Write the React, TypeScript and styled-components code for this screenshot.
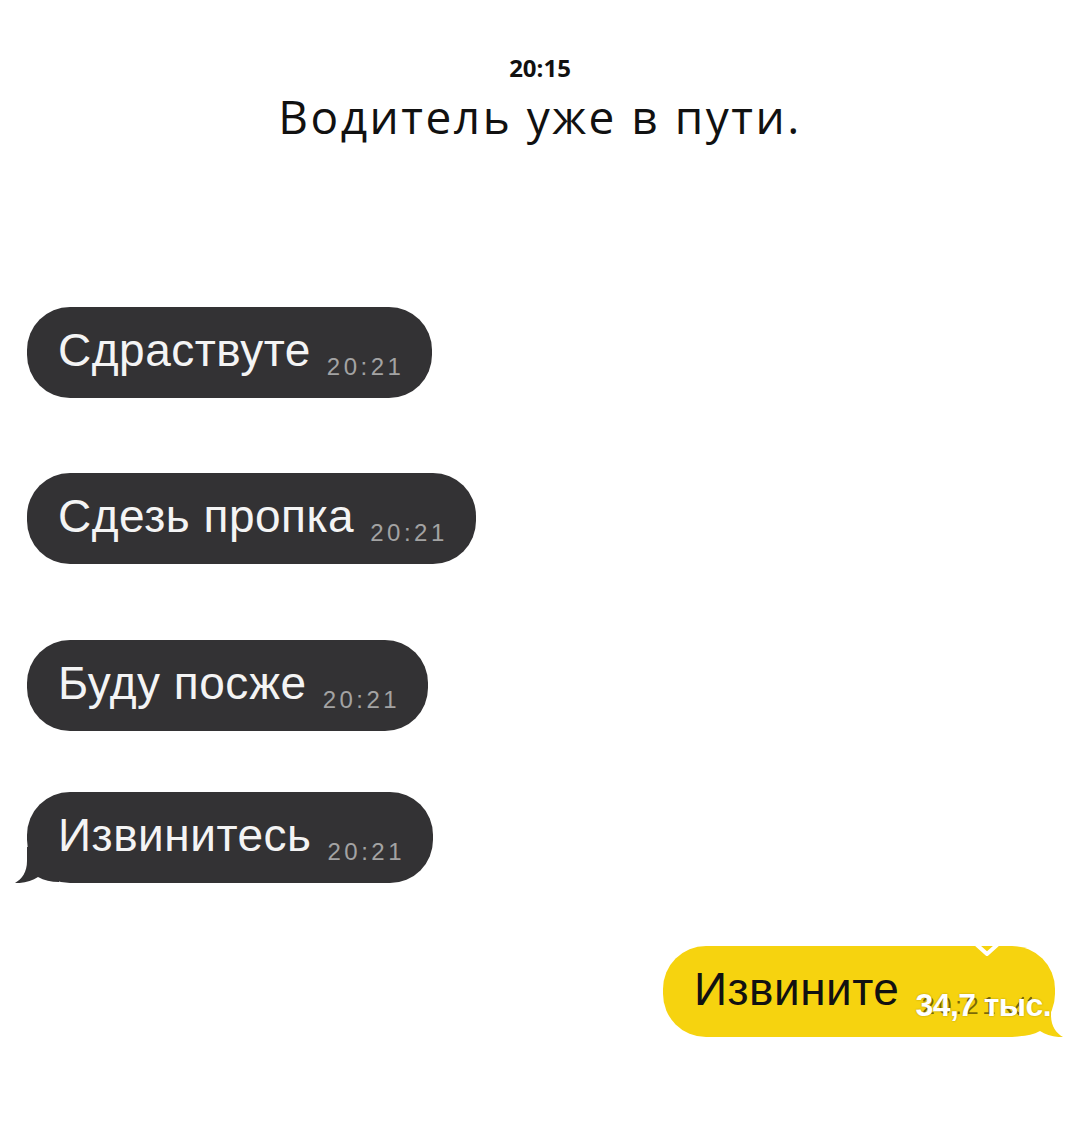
import React from "react"
import styled, { createGlobalStyle } from "styled-components"

const GlobalStyle = createGlobalStyle`
  html, body {
    margin: 0;
    padding: 0;
    background: #ffffff;
  }
`

const Page = styled.div`
  width: 1080px;
  min-height: 1124px;
  display: flex;
  flex-direction: column;
  background: #ffffff;
`

const Header = styled.header`
  display: flex;
  flex-direction: column;
  align-items: center;
  padding-top: 53px;
  font-family: "Open Sans", "Liberation Sans", sans-serif;
  color: #111;
`

const Stamp = styled.div`
  font-size: 24px;
  line-height: 30px;
  font-weight: 700;
`

const Title = styled.div`
  margin-top: 8px;
  font-size: 46px;
  line-height: 50px;
  letter-spacing: 2.5px;
`

const Thread = styled.div`
  display: flex;
  flex-direction: column;
  align-items: flex-start;
  padding: 166px 25px 0 27px;
`

const Bubble = styled.div<{ $mine?: boolean; $gap: number }>`
  position: relative;
  display: flex;
  align-items: flex-start;
  box-sizing: border-box;
  height: 91px;
  margin-top: ${(p) => p.$gap}px;
  padding: 20px ${(p) => (p.$mine ? 20 : 28)}px 0 31px;
  border-radius: 43px;
  background: ${(p) => (p.$mine ? "#f6d30f" : "#333234")};
  color: ${(p) => (p.$mine ? "#111" : "#f4f4f4")};
  align-self: ${(p) => (p.$mine ? "flex-end" : "flex-start")};
  font-family: "Liberation Sans", Arial, sans-serif;
`

const Text = styled.span`
  font-size: 46px;
  line-height: 46px;
  letter-spacing: 0.5px;
  white-space: nowrap;
`

const Time = styled.span<{ $mine?: boolean }>`
  display: flex;
  align-items: center;
  gap: 6px;
  margin-top: 28px;
  margin-left: ${(p) => (p.$mine ? 22 : 16)}px;
  font-size: 24px;
  line-height: 24px;
  letter-spacing: 3.5px;
  color: ${(p) => (p.$mine ? "rgba(40, 34, 0, 0.6)" : "#a3a3a3")};
  white-space: nowrap;
`

const Tail = styled.svg<{ $mine?: boolean }>`
  position: absolute;
  bottom: 0;
  width: 44px;
  height: 36px;
  ${(p) => (p.$mine ? "right: -8px; transform: scaleX(-1);" : "left: -12px;")}
`

const Notch = styled.svg`
  position: absolute;
  top: -3px;
  right: 56px;
  width: 24px;
  height: 14px;
`

const Views = styled.span`
  position: absolute;
  top: 43px;
  right: 4px;
  font-family: "Liberation Sans", Arial, sans-serif;
  font-size: 32px;
  line-height: 32px;
  font-weight: 700;
  letter-spacing: -0.6px;
  color: #ffffff;
  text-shadow: 0 0 2px rgba(0, 0, 0, 0.3);
  white-space: nowrap;
`

const TailShape = ({ color, mine }: { color: string; mine?: boolean }) => (
  <Tail $mine={mine} viewBox="0 0 44 36">
    <path
      d="M12 0 L12 14 C12 25 7 32 0 36 C9 36.5 17 34 23 30 C29 33.5 36 35 44 35 L44 0 Z"
      fill={color}
    />
  </Tail>
)

const DoubleCheck = () => (
  <svg width="30" height="22" viewBox="0 0 30 22">
    <path
      d="M2 13 L7 19 L18 3 M11 16 L14 19 L26 3"
      fill="none"
      stroke="rgba(40, 34, 0, 0.6)"
      strokeWidth="2.2"
      strokeLinecap="round"
      strokeLinejoin="round"
    />
  </svg>
)

interface IMessage {
  text: string
  gap: number
  tail?: boolean
}

const messages: IMessage[] = [
  { text: "Сдраствуте", gap: 0 },
  { text: "Сдезь пропка", gap: 75 },
  { text: "Буду посже", gap: 76 },
  { text: "Извинитесь", gap: 61, tail: true },
]

const App = () => (
  <Page>
    <GlobalStyle />
    <Header>
      <Stamp>20:15</Stamp>
      <Title>Водитель уже в пути.</Title>
    </Header>
    <Thread>
      {messages.map((m) => (
        <Bubble key={m.text} $gap={m.gap}>
          {m.tail && <TailShape color="#333234" />}
          <Text>{m.text}</Text>
          <Time>20:21</Time>
        </Bubble>
      ))}
      <Bubble $mine $gap={63}>
        <TailShape color="#f6d30f" mine />
        <Notch viewBox="0 0 24 14">
          <path
            d="M2 2 L12 11 L22 2"
            fill="none"
            stroke="#ffffff"
            strokeWidth="4"
            strokeLinecap="round"
            strokeLinejoin="round"
          />
        </Notch>
        <Text>Извините</Text>
        <Time $mine>
          20:21
          <DoubleCheck />
        </Time>
        <Views>34,7 тыс.</Views>
      </Bubble>
    </Thread>
  </Page>
)

export default App
